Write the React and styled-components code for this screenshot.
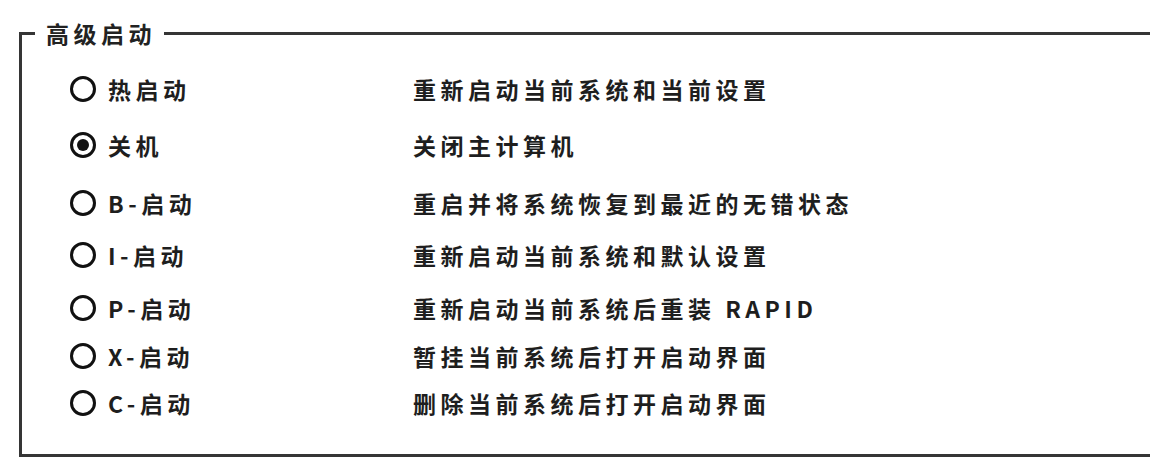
import React from 'react';
import styled, { createGlobalStyle } from 'styled-components';

const options = [
  { key: 'warm', label: '热启动', desc: '重新启动当前系统和当前设置', space: 0 },
  { key: 'off', label: '关机', desc: '关闭主计算机', space: 12, checked: true },
  { key: 'b', label: 'B-启动', desc: '重启并将系统恢复到最近的无错状态', space: 14 },
  { key: 'i', label: 'I-启动', desc: '重新启动当前系统和默认设置', space: 8 },
  { key: 'p', label: 'P-启动', desc: '重新启动当前系统后重装 RAPID', space: 9 },
  { key: 'x', label: 'X-启动', desc: '暂挂当前系统后打开启动界面', space: 4 },
  { key: 'c', label: 'C-启动', desc: '删除当前系统后打开启动界面', space: 3 },
];

function AdvancedRestart() {
  return (
    <>
      <GlobalStyle />
      <Frame>
        <Legend>高级启动</Legend>
        <OptionList>
          {options.map(opt => (
            <OptionRow key={opt.key} $space={opt.space}>
              <Choice>
                <Radio $checked={opt.checked} />
                <Label>{opt.label}</Label>
              </Choice>
              <Description>{opt.desc}</Description>
            </OptionRow>
          ))}
        </OptionList>
      </Frame>
    </>
  );
}

const GlobalStyle = createGlobalStyle`
  html, body {
    margin: 0;
    background: #fff;
    overflow: hidden;
  }
  body {
    font-family: "Noto Sans CJK SC", "Noto Sans", sans-serif;
    color: #1e1e1e;
  }
`;

const Frame = styled.fieldset`
  box-sizing: border-box;
  margin: 18px 0 0 19px;
  padding: 0;
  width: 1200px;
  height: 439px;
  border: 3px solid #353535;
  min-width: 0;
`;

const Legend = styled.legend`
  margin-left: 13px;
  padding: 0 8px 0 11px;
  font-size: 23px;
  line-height: 30px;
  font-weight: 700;
  letter-spacing: 4.5px;
  color: #222;
`;

const OptionList = styled.div`
  display: flex;
  flex-direction: column;
  padding: 19px 0 0 48px;
`;

const OptionRow = styled.div`
  display: grid;
  grid-template-columns: 343px 1fr;
  align-items: center;
  height: 44px;
  margin-top: ${props => props.$space}px;
`;

const Choice = styled.div`
  display: flex;
  align-items: center;
  gap: 12px;
`;

const Radio = styled.span`
  box-sizing: border-box;
  position: relative;
  width: 26px;
  height: 26px;
  border: 3.5px solid #111;
  border-radius: 50%;
  flex: none;
  &::after {
    content: '';
    display: ${props => (props.$checked ? 'block' : 'none')};
    position: absolute;
    left: 3.5px;
    top: 3.5px;
    width: 12px;
    height: 12px;
    border-radius: 50%;
    background: #111;
  }
`;

const Label = styled.span`
  font-size: 23px;
  line-height: 30px;
  font-weight: 700;
  letter-spacing: 4.5px;
`;

const Description = styled.span`
  font-size: 23px;
  line-height: 30px;
  font-weight: 700;
  letter-spacing: 4.5px;
  white-space: nowrap;
`;

export default AdvancedRestart;
